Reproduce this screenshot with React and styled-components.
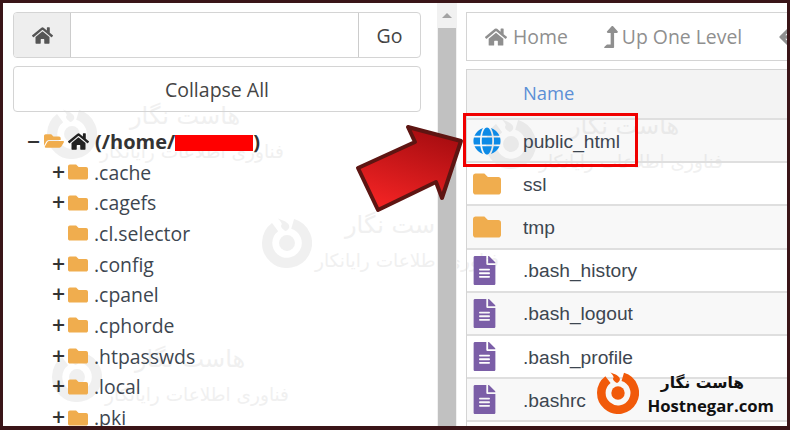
import React from "react";
import styled, { createGlobalStyle } from "styled-components";
import { FaHome, FaFolder, FaFolderOpen, FaGlobe, FaFileAlt, FaLevelUpAlt, FaArrowLeft } from "react-icons/fa";

const Global = createGlobalStyle`
  html, body { margin: 0; padding: 0; background: #fff; }
  * { box-sizing: border-box; }
`;

const Frame = styled.div`
  position: relative;
  width: 790px;
  height: 430px;
  overflow: hidden;
  display: flex;
  background: #fff;
  border: solid #3a1518;
  border-width: 3px 3px 4px 3px;
  font-family: "Open Sans", sans-serif;
  color: #333;
`;

const LeftPanel = styled.div`
  position: relative;
  z-index: 1;
  width: 434px;
  flex: none;
  padding: 9px 16px 0 10px;
  display: flex;
  flex-direction: column;
  gap: 8px;
`;

const PathGroup = styled.div`
  display: flex;
  flex: none;
  height: 46px;
  border: 1px solid #d4d4d4;
  border-radius: 4px;
  overflow: hidden;
`;

const HomeAddon = styled.div`
  width: 57px;
  background: #eee;
  border-right: 1px solid #ccc;
  display: flex;
  align-items: center;
  justify-content: center;
  color: #555;
  font-size: 21px;
`;

const PathInput = styled.div`
  flex: 1;
`;

const GoButton = styled.div`
  width: 62px;
  border-left: 1px solid #ccc;
  display: flex;
  align-items: center;
  justify-content: center;
  font-size: 19.5px;
  color: #444;
`;

const CollapseButton = styled.div`
  flex: none;
  height: 46px;
  border: 1px solid #d4d4d4;
  border-radius: 4px;
  display: flex;
  align-items: center;
  justify-content: center;
  font-size: 19.5px;
  color: #444;
`;

const Tree = styled.div`
  display: flex;
  flex-direction: column;
  flex: none;
  padding-top: 6px;
`;

const TreeRow = styled.div`
  height: 30.7px;
  display: flex;
  align-items: center;
  flex: none;
  padding-left: ${(p) => (p.$root ? 14 : 39)}px;
  font-size: ${(p) => (p.$root ? 20 : 19.4)}px;
  font-weight: ${(p) => (p.$root ? 700 : 400)};
  color: ${(p) => (p.$root ? "#333" : "#3d4650")};
  white-space: nowrap;
`;

const Toggle = styled.span`
  width: ${(p) => (p.$root ? 17 : 16)}px;
  flex: none;
  font-size: 23px;
  line-height: 1;
  font-weight: 600;
  color: #333;
  text-align: left;
`;

const FolderIcon = styled.span`
  display: flex;
  flex: none;
  font-size: 20px;
  color: #f0ad4e;
  margin-right: ${(p) => p.$gap}px;
`;

const RootHome = styled.span`
  display: flex;
  flex: none;
  font-size: 21px;
  color: #222;
  margin-right: 6px;
`;

const Redaction = styled.span`
  display: inline-block;
  width: 78px;
  height: 16px;
  background: #ff0000;
  vertical-align: -2px;
`;

const Scrollbar = styled.div`
  position: relative;
  z-index: 1;
  width: 20px;
  flex: none;
  background: #f1f1f1;
  display: flex;
  flex-direction: column;
  align-items: center;
`;

const ScrollUp = styled.div`
  height: 25px;
  width: 100%;
  flex: none;
  display: flex;
  align-items: center;
  justify-content: center;
  &::before {
    content: "";
    border: 5px solid transparent;
    border-top: 0;
    border-bottom: 5px solid #a3a3a3;
  }
`;

const ScrollThumb = styled.div`
  flex: 1;
  width: 18px;
  background: #c1c1c1;
`;

const RightPanel = styled.div`
  position: relative;
  z-index: 1;
  flex: 1;
  min-width: 0;
  padding: 9px 0 0 9px;
  display: flex;
  flex-direction: column;
  gap: 8px;
`;

const Toolbar = styled.div`
  height: 49px;
  width: 340px;
  flex: none;
  border: 1px solid #d4d4d4;
  border-right: 0;
  display: flex;
  align-items: center;
  gap: 32px;
  padding-left: 18px;
  font-size: 19.4px;
  color: #8f8f8f;
  white-space: nowrap;
  overflow: hidden;
`;

const ToolItem = styled.div`
  display: flex;
  align-items: center;
  flex: none;
  gap: ${(p) => p.$gap}px;
  margin-left: ${(p) => p.$lead || 0}px;
  svg { font-size: 22px; flex: none; }
`;

const Table = styled.div`
  width: 340px;
  flex: none;
  border-left: 1px solid #d4d4d4;
  border-top: 1px solid #d4d4d4;
`;

const HeadRow = styled.div`
  height: 48px;
  display: flex;
  align-items: center;
  background: #f3f3f3;
  padding: 0 0 4px 56px;
  font-size: 18.4px;
  color: #5b8fd6;
`;

const FileRow = styled.div`
  height: 43.2px;
  display: flex;
  align-items: center;
  border-top: 2px solid #dfdfdf;
  background: ${(p) => (p.$striped ? "rgba(0, 0, 0, 0.028)" : "transparent")};
  font-family: "Liberation Sans", Arial, sans-serif;
  font-size: 19.2px;
  color: #3d4650;
`;

const FileName = styled.span`
  margin-top: 2px;
`;

const FileIcon = styled.span`
  width: 56px;
  flex: none;
  display: flex;
  padding-left: ${(p) => (p.$kind === "file" ? 3 : 6)}px;
  color: ${(p) => (p.$kind === "globe" ? "#0d8ae6" : p.$kind === "file" ? "#7b5ea7" : "#f0ad4e")};
  font-size: ${(p) => (p.$kind === "file" ? 29 : 28)}px;
`;

const Callout = styled.div`
  position: absolute;
  z-index: 2;
  left: 460px;
  top: 110px;
  width: 175px;
  height: 54px;
  border: 3px solid #f00000;
`;

const ArrowSvg = styled.svg`
  position: absolute;
  z-index: 2;
  left: 347px;
  top: 115px;
  width: 120px;
  height: 105px;
`;

const Watermark = styled.div`
  position: absolute;
  z-index: 0;
  left: ${(p) => p.$x}px;
  top: ${(p) => p.$y}px;
  display: flex;
  align-items: center;
  gap: 3px;
  opacity: 0.42;
  pointer-events: none;
`;

const WatermarkText = styled.div`
  display: flex;
  flex-direction: column;
  align-items: flex-end;
  font-family: "DejaVu Sans", sans-serif;
  color: #dcdcdc;
  white-space: nowrap;
  direction: rtl;
`;

const WatermarkTitle = styled.div`
  font-size: 24px;
  line-height: 35px;
  margin-left: 30px;
`;

const WatermarkLine = styled.div`
  font-size: 18.5px;
  line-height: 35px;
`;

const Brand = styled.div`
  position: absolute;
  z-index: 2;
  right: 13px;
  bottom: 9px;
  display: flex;
  align-items: flex-start;
  gap: 8px;
`;

const BrandText = styled.div`
  display: flex;
  flex-direction: column;
  color: #111;
`;

const BrandFa = styled.div`
  font-family: "DejaVu Sans", sans-serif;
  font-weight: 700;
  font-size: 15.5px;
  line-height: 22px;
  direction: rtl;
  margin-right: 30px;
`;

const BrandEn = styled.div`
  font-family: "Open Sans", sans-serif;
  font-weight: 700;
  font-size: 16.7px;
  line-height: 23px;
`;

const Logo = ({ size, color }) => (
  <svg width={size} height={size} viewBox="0 0 44 44" fill="none">
    <path d="M27 5.2A17.5 17.5 0 1 1 11.5 8" stroke={color} strokeWidth="9" />
    <circle cx="22" cy="22" r="7" fill={color} />
    <path d="M14 0.5C18 2 24 4 24 7.5 24 9 23 10.5 21 11.5 18 10 15.5 7.5 17.5 5.5 17 3.5 15.5 2 14 0.5z" fill={color} />
  </svg>
);

const folders = [
  [".cache", true], [".cagefs", true], [".cl.selector", false], [".config", true],
  [".cpanel", true], [".cphorde", true], [".htpasswds", true], [".local", true], [".pki", true],
];

const files = [
  ["public_html", "globe"], ["ssl", "folder"], ["tmp", "folder"], [".bash_history", "file"],
  [".bash_logout", "file"], [".bash_profile", "file"], [".bashrc", "file"], ["", "none"],
];

const kindIcon = { globe: <FaGlobe />, folder: <FaFolder />, file: <FaFileAlt />, none: null };

const marks = [
  [44, 96], [259, 205], [49, 339], [483, 106],
];

export default function App() {
  return (
    <Frame>
      <Global />
      {marks.map(([x, y]) => (
        <Watermark key={x + "-" + y} $x={x} $y={y}>
          <Logo size={50} color="#dcdcdc" />
          <WatermarkText>
            <WatermarkTitle>هاست نگار</WatermarkTitle>
            <WatermarkLine>فناوری اطلاعات رایانکار</WatermarkLine>
          </WatermarkText>
        </Watermark>
      ))}
      <LeftPanel>
        <PathGroup>
          <HomeAddon><FaHome /></HomeAddon>
          <PathInput />
          <GoButton>Go</GoButton>
        </PathGroup>
        <CollapseButton>Collapse All</CollapseButton>
        <Tree>
          <TreeRow $root>
            <Toggle $root>−</Toggle>
            <FolderIcon $gap={4}><FaFolderOpen /></FolderIcon>
            <RootHome><FaHome /></RootHome>
            <span>(/home/<Redaction />)</span>
          </TreeRow>
          {folders.map(([name, plus]) => (
            <TreeRow key={name}>
              <Toggle>{plus ? "+" : ""}</Toggle>
              <FolderIcon $gap={6}><FaFolder /></FolderIcon>
              {name}
            </TreeRow>
          ))}
        </Tree>
      </LeftPanel>
      <Scrollbar>
        <ScrollUp />
        <ScrollThumb />
      </Scrollbar>
      <RightPanel>
        <Toolbar>
          <ToolItem $gap={6}><FaHome />Home</ToolItem>
          <ToolItem $gap={0}><FaLevelUpAlt />Up One Level</ToolItem>
          <ToolItem $gap={0} $lead={4}><FaArrowLeft /></ToolItem>
        </Toolbar>
        <Table>
          <HeadRow>Name</HeadRow>
          {files.map(([name, kind], i) => (
            <FileRow key={kind + name} $striped={i % 2 === 0}>
              <FileIcon $kind={kind}>{kindIcon[kind]}</FileIcon>
              <FileName>{name}</FileName>
            </FileRow>
          ))}
        </Table>
      </RightPanel>
      <Callout />
      <ArrowSvg viewBox="350 118 120 105">
        <defs>
          <linearGradient id="arrowFill" x1="0.7" y1="0" x2="0.3" y2="1">
            <stop offset="0" stopColor="#a50c10" />
            <stop offset="1" stopColor="#f42424" />
          </linearGradient>
        </defs>
        <polygon
          points="461,141 408,127 415,142 358,168 378,210 436,182 442,198"
          fill="url(#arrowFill)"
          stroke="#5e1512"
          strokeWidth="4"
          strokeLinejoin="round"
        />
      </ArrowSvg>
      <Brand>
        <Logo size={42} color="#f15a0a" />
        <BrandText>
          <BrandFa>هاست نگار</BrandFa>
          <BrandEn>Hostnegar.com</BrandEn>
        </BrandText>
      </Brand>
    </Frame>
  );
}
